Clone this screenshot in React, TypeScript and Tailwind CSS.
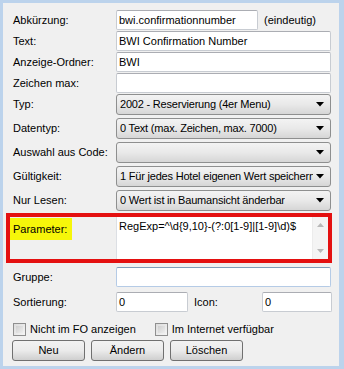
import { ChangeEvent } from 'react'

const font = { fontFamily: '"Liberation Sans", Arial, sans-serif' }

function Label({ children }: { children: string }) {
  return <div className="w-[106px] shrink-0 pl-[3px] text-[11px] text-black">{children}</div>
}

function TextBox({ value, w = 'w-[215px]' }: { value: string; w?: string }) {
  return (
    <div
      className={`${w} h-[20px] shrink-0 bg-white border border-[#c8ccd2] border-t-[#abadb3] rounded-[2px] pl-[2px] flex items-center text-[11px] text-black leading-none`}
    >
      {value}
    </div>
  )
}

function Combo({ value }: { value: string }) {
  return (
    <div className="w-[215px] h-[21px] shrink-0 flex items-center justify-between rounded-[3px] border border-[#8e8f8f] bg-gradient-to-b from-[#f3f3f3] via-[#e9e9e9] to-[#d6d6d6] pl-[3px] pr-[6px] text-[11px] text-black leading-none">
      <span className="whitespace-nowrap overflow-hidden tracking-[-0.2px]">{value}</span>
      <svg width="8" height="5" viewBox="0 0 8 5" className="shrink-0 ml-[3px]">
        <path d="M0 0 H8 L4 4.5 Z" fill="#000" />
      </svg>
    </div>
  )
}

function CheckBox({ label }: { label: string }) {
  return (
    <div className="flex items-center gap-[4px] text-[11px] text-black">
      <div className="w-[13px] h-[13px] border border-[#8f8f8f] bg-gradient-to-br from-[#dcdcdc] to-[#f5f5f5] p-[2px]">
        <div className="w-full h-full bg-gradient-to-br from-[#cfcfcf] to-[#eeeeee]" />
      </div>
      <span>{label}</span>
    </div>
  )
}

function Btn({ children }: { children: string }) {
  return (
    <div className="w-[73px] h-[21px] flex items-center justify-center rounded-[3px] border border-[#707070] bg-gradient-to-b from-[#f2f2f2] via-[#ebebeb] to-[#cfcfcf] text-[11px] text-black">
      {children}
    </div>
  )
}

export default function App() {
  const noop = (_e: ChangeEvent) => {}
  void noop
  return (
    <div className="w-[344px] h-[369px] bg-[#bcd3ec] pt-[3px] pl-[3px] pr-[5px] pb-[3px]" style={font}>
      <div className="w-full h-full bg-[#f0f0f0] flex flex-col pt-[7px]">
        {/* text fields */}
        <div className="flex flex-col gap-[1px] pl-[7px]">
          <div className="flex items-center">
            <Label>Abkürzung:</Label>
            <TextBox value="bwi.confirmationnumber" w="w-[142px]" />
            <span className="ml-[6px] text-[11px]">(eindeutig)</span>
          </div>
          <div className="flex items-center">
            <Label>Text:</Label>
            <TextBox value="BWI Confirmation Number" />
          </div>
          <div className="flex items-center">
            <Label>Anzeige-Ordner:</Label>
            <TextBox value="BWI" />
          </div>
          <div className="flex items-center">
            <Label>Zeichen max:</Label>
            <TextBox value="" />
          </div>
        </div>

        {/* combos */}
        <div className="flex flex-col gap-[3px] pl-[7px] mt-[1px]">
          <div className="flex items-center">
            <Label>Typ:</Label>
            <Combo value="2002 - Reservierung (4er Menu)" />
          </div>
          <div className="flex items-center">
            <Label>Datentyp:</Label>
            <Combo value="0 Text (max. Zeichen, max. 7000)" />
          </div>
          <div className="flex items-center">
            <Label>Auswahl aus Code:</Label>
            <Combo value="" />
          </div>
          <div className="flex items-center">
            <Label>Gültigkeit:</Label>
            <Combo value="1 Für jedes Hotel eigenen Wert speichern" />
          </div>
          <div className="flex items-center">
            <Label>Nur Lesen:</Label>
            <Combo value="0 Wert ist in Baumansicht änderbar" />
          </div>
        </div>

        {/* highlighted parameter */}
        <div className="ml-[3px] mt-[2px] w-[326px] h-[50px] border-4 border-[#e41010] flex overflow-hidden">
          <div className="w-[106px] shrink-0 pt-[1px]">
            <div className="w-[62px] h-[22px] bg-[#f6f60a] pl-[3px] pt-[3px] text-[11px] text-black">Parameter:</div>
          </div>
          <div className="flex-1 h-full bg-white border-l border-[#dcdfe4] flex">
            <div className="flex-1 pl-[2px] pt-[4px] text-[11px] text-black leading-none whitespace-nowrap">
              {'RegExp=^\\d{9,10}-(?:0[1-9]|[1-9]\\d)$'}
            </div>
            <div className="w-[16px] h-full bg-[#f4f4f4] border-l border-[#ececec] flex flex-col items-center justify-between py-[6px]">
              <svg width="7" height="4" viewBox="0 0 7 4">
                <path d="M0 4 L3.5 0 L7 4 Z" fill="#b8b8b8" />
              </svg>
              <svg width="7" height="4" viewBox="0 0 7 4">
                <path d="M0 0 L7 0 L3.5 4 Z" fill="#b8b8b8" />
              </svg>
            </div>
          </div>
        </div>

        {/* lower fields */}
        <div className="flex flex-col gap-[5px] pl-[7px] mt-[4px]">
          <div className="flex items-center">
            <Label>Gruppe:</Label>
            <div className="w-[215px] h-[20px] bg-white border border-[#b5cbe6] border-t-[#7f9db9] rounded-[2px]" />
          </div>
          <div className="flex items-center">
            <Label>Sortierung:</Label>
            <TextBox value="0" w="w-[72px]" />
            <span className="ml-[6px] w-[68px] text-[11px]">Icon:</span>
            <TextBox value="0" w="w-[70px]" />
          </div>
        </div>

        <div className="flex items-center pl-[10px] mt-[9px] gap-[19px]">
          <CheckBox label="Nicht im FO anzeigen" />
          <CheckBox label="Im Internet verfügbar" />
        </div>

        <div className="flex items-center pl-[9px] mt-[2px] gap-[6px]">
          <Btn>Neu</Btn>
          <Btn>Ändern</Btn>
          <Btn>Löschen</Btn>
        </div>
      </div>
    </div>
  )
}
